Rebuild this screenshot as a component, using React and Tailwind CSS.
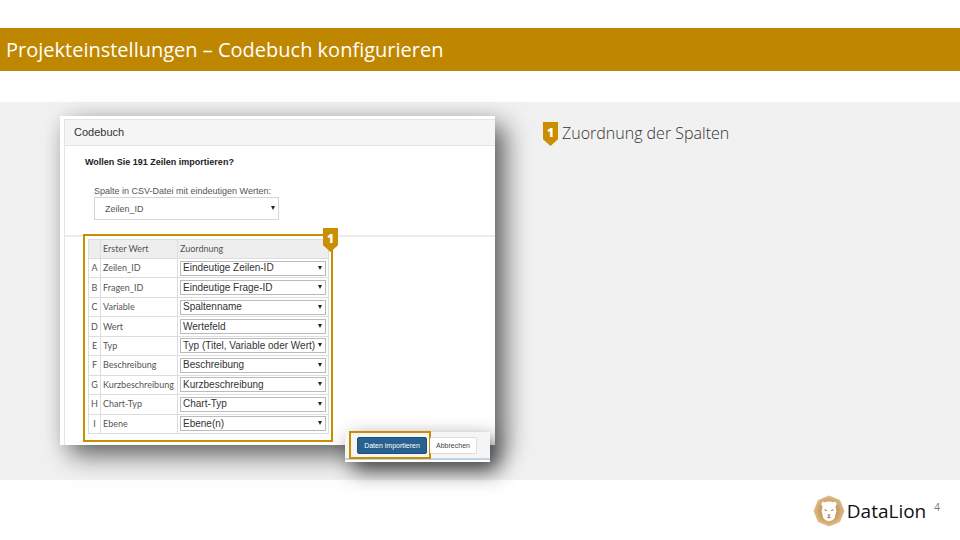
import { useId } from "react";

const rows = [
  ["A", "Zeilen_ID", "Eindeutige Zeilen-ID"],
  ["B", "Fragen_ID", "Eindeutige Frage-ID"],
  ["C", "Variable", "Spaltenname"],
  ["D", "Wert", "Wertefeld"],
  ["E", "Typ", "Typ (Titel, Variable oder Wert)"],
  ["F", "Beschreibung", "Beschreibung"],
  ["G", "Kurzbeschreibung", "Kurzbeschreibung"],
  ["H", "Chart-Typ", "Chart-Typ"],
  ["I", "Ebene", "Ebene(n)"],
];

function Arrow({ className }) {
  return (
    <svg viewBox="0 0 4 4" className={`pointer-events-none absolute h-1 w-1 ${className}`} aria-hidden="true">
      <path d="M0 0h4L2 4z" fill="#222" />
    </svg>
  );
}

function Marker({ className = "" }) {
  return (
    <span
      className={`flex h-6 w-[15px] justify-center bg-[#c98f00] pt-[3px] font-['Open_Sans',sans-serif] text-[12px] leading-4 font-extrabold text-white [clip-path:polygon(0_0,100%_0,100%_72%,50%_100%,0_72%)] ${className}`}
    >
      1
    </span>
  );
}

function MappingTable() {
  const id = useId();
  return (
    <table className="h-[195px] w-full border-collapse font-[Lato,sans-serif] text-[9px] leading-3 text-[#555]">
      <thead>
        <tr className="h-[19px] bg-[#eee] text-left">
          <th className="w-3 border border-[#dcdde3]" />
          <th className="w-[77px] border border-[#dcdde3] px-[2px] font-normal">Erster Wert</th>
          <th className="border border-[#dcdde3] px-[2px] font-normal">Zuordnung</th>
        </tr>
      </thead>
      <tbody>
        {rows.map(([letter, name, value]) => (
          <tr key={letter}>
            <td className="border border-[#dcdde3] text-center">{letter}</td>
            <td className="border border-[#dcdde3] px-[2px]">
              <label htmlFor={id + letter}>{name}</label>
            </td>
            <td className="border border-[#dcdde3] px-[2px]">
              <div className="relative">
                <select
                  id={id + letter}
                  className="block h-[15px] w-full appearance-none border border-[#bbb] bg-white px-[2px] font-['Liberation_Sans',Arial,sans-serif] text-[10px] leading-3 text-[#333]"
                >
                  <option>{value}</option>
                </select>
                <Arrow className="top-[5px] right-1" />
              </div>
            </td>
          </tr>
        ))}
      </tbody>
    </table>
  );
}

function LionLogo() {
  return (
    <svg viewBox="0 0 32 32" className="h-8 w-8" aria-hidden="true">
      <defs>
        <radialGradient id="lion">
          <stop offset="0.35" stopColor="#c08c48" />
          <stop offset="1" stopColor="#e0bf8d" />
        </radialGradient>
      </defs>
      <path d="M16 .5 27 5l4.500 11L27 27l-11 4.500L5 27 .5 16 5 5z" fill="url(#lion)" />
      <path
        d="M8.500 8.500c.6-2 2.600-2.200 3.800-1l1.700-1h4l1.700 1c1.200-1.200 3.200-1 3.800 1 .4 1.300-.2 2.200-1 2.800l1 5.200-1 3-.6 3.300-2.400 2.400-3.500 1-3.500-1-2.400-2.400-.6-3.300-1-3 1-5.200c-.8-.6-1.400-1.500-1-2.800z"
        fill="#fff"
      />
      <path
        d="M11.200 14l3 1.200-.4.900-1.900-.5zM20.800 14l-3 1.200.4.900 1.900-.5zM14.200 19.500h3.600l-1.300 1.500v1l2 .5-2.500.7-2.500-.7 2-.5v-1z"
        fill="#a8783c"
      />
    </svg>
  );
}

export default function App() {
  return (
    <div className="flex min-h-screen flex-col bg-white pt-7 font-['Open_Sans',sans-serif]">
      <header className="flex h-[43px] items-center bg-[#bf8600] px-[6px]">
        <h1 className="text-[20px] leading-6 text-white">Projekteinstellungen – Codebuch konfigurieren</h1>
      </header>

      <main className="mt-[31px] flex items-start gap-12 bg-[#f1f1f1] pt-[14px] pr-6 pb-[35px] pl-[60px]">
        <div className="relative w-[435px] shrink-0 font-['Liberation_Sans',Arial,sans-serif]">
          <section className="bg-white pt-[3px] pl-1 shadow-[10px_10px_24px_rgba(0,0,0,0.6),0_0_18px_rgba(0,0,0,0.06)]">
            <div className="border-t border-l border-[#e3e3e3] pb-[3px]">
              <h2 className="border-b border-[#e3e3e3] bg-[#f5f5f5] px-[9px] py-[5px] text-[11px] leading-[15px] text-[#333]">
                Codebuch
              </h2>
              <div className="border-b-2 border-[#ececec] px-5 pt-[10px] pb-[15px]">
                <p className="text-[9px] leading-3 font-bold text-[#222]">Wollen Sie 191 Zeilen importieren?</p>
                <div className="mt-[17px] ml-[9px] w-[185px]">
                  <label htmlFor="unique" className="block text-[9px] leading-3 whitespace-nowrap text-[#555]">
                    Spalte in CSV-Datei mit eindeutigen Werten:
                  </label>
                  <div className="relative">
                    <select
                      id="unique"
                      className="block h-[23px] w-full appearance-none border border-[#d5d5d5] bg-white px-[10px] text-[9px] leading-3 text-[#555]"
                    >
                      <option>Zeilen_ID</option>
                    </select>
                    <Arrow className="top-[9px] right-1" />
                  </div>
                </div>
              </div>
              <div className="relative z-10 -mt-[3px] ml-[18px] w-[250px] border-2 border-[#c98f00] bg-white pt-[3px] pr-[2px] pb-[6px] pl-[3px]">
                <MappingTable />
                <Marker className="absolute -top-2 -right-[7px]" />
              </div>
            </div>
          </section>

          <div className="absolute right-[5px] -bottom-[17px] z-20 w-[145px] bg-white pb-[2px] shadow-[8px_10px_20px_rgba(0,0,0,0.6),0_0_18px_rgba(0,0,0,0.1)]">
            <div className="flex items-center border-b-2 border-[#bdd3e6] bg-[#f5f5f5] pl-1">
              <div className="-my-px border-2 border-[#c98f00] pt-1 pr-[2px] pb-[3px] pl-[6px]">
                <button className="block h-[17px] w-[70px] rounded-[2px] border border-[#1d4f7c] bg-[#286090] text-[7px] leading-3 whitespace-nowrap text-white">
                  Daten importieren
                </button>
              </div>
              <button className="mb-1 -ml-px block h-[17px] w-[47px] self-end rounded-[2px] border border-l-0 border-[#ddd] bg-white text-[7px] leading-3 text-[#444]">
                Abbrechen
              </button>
            </div>
          </div>
        </div>

        <ol className="pt-[6px]">
          <li className="flex items-start gap-1">
            <Marker />
            <span className="text-[16px] leading-[22px] font-light text-[#333]">Zuordnung der Spalten</span>
          </li>
        </ol>
      </main>

      <footer className="flex items-start justify-end gap-2 pt-[15px] pr-5">
        <div className="flex items-center gap-[2px]">
          <LionLogo />
          <span className="text-[19px] leading-6 text-[#111]">DataLion</span>
        </div>
        <span className="pt-1 text-[10px] leading-4 text-[#777]">4</span>
      </footer>
    </div>
  );
}
